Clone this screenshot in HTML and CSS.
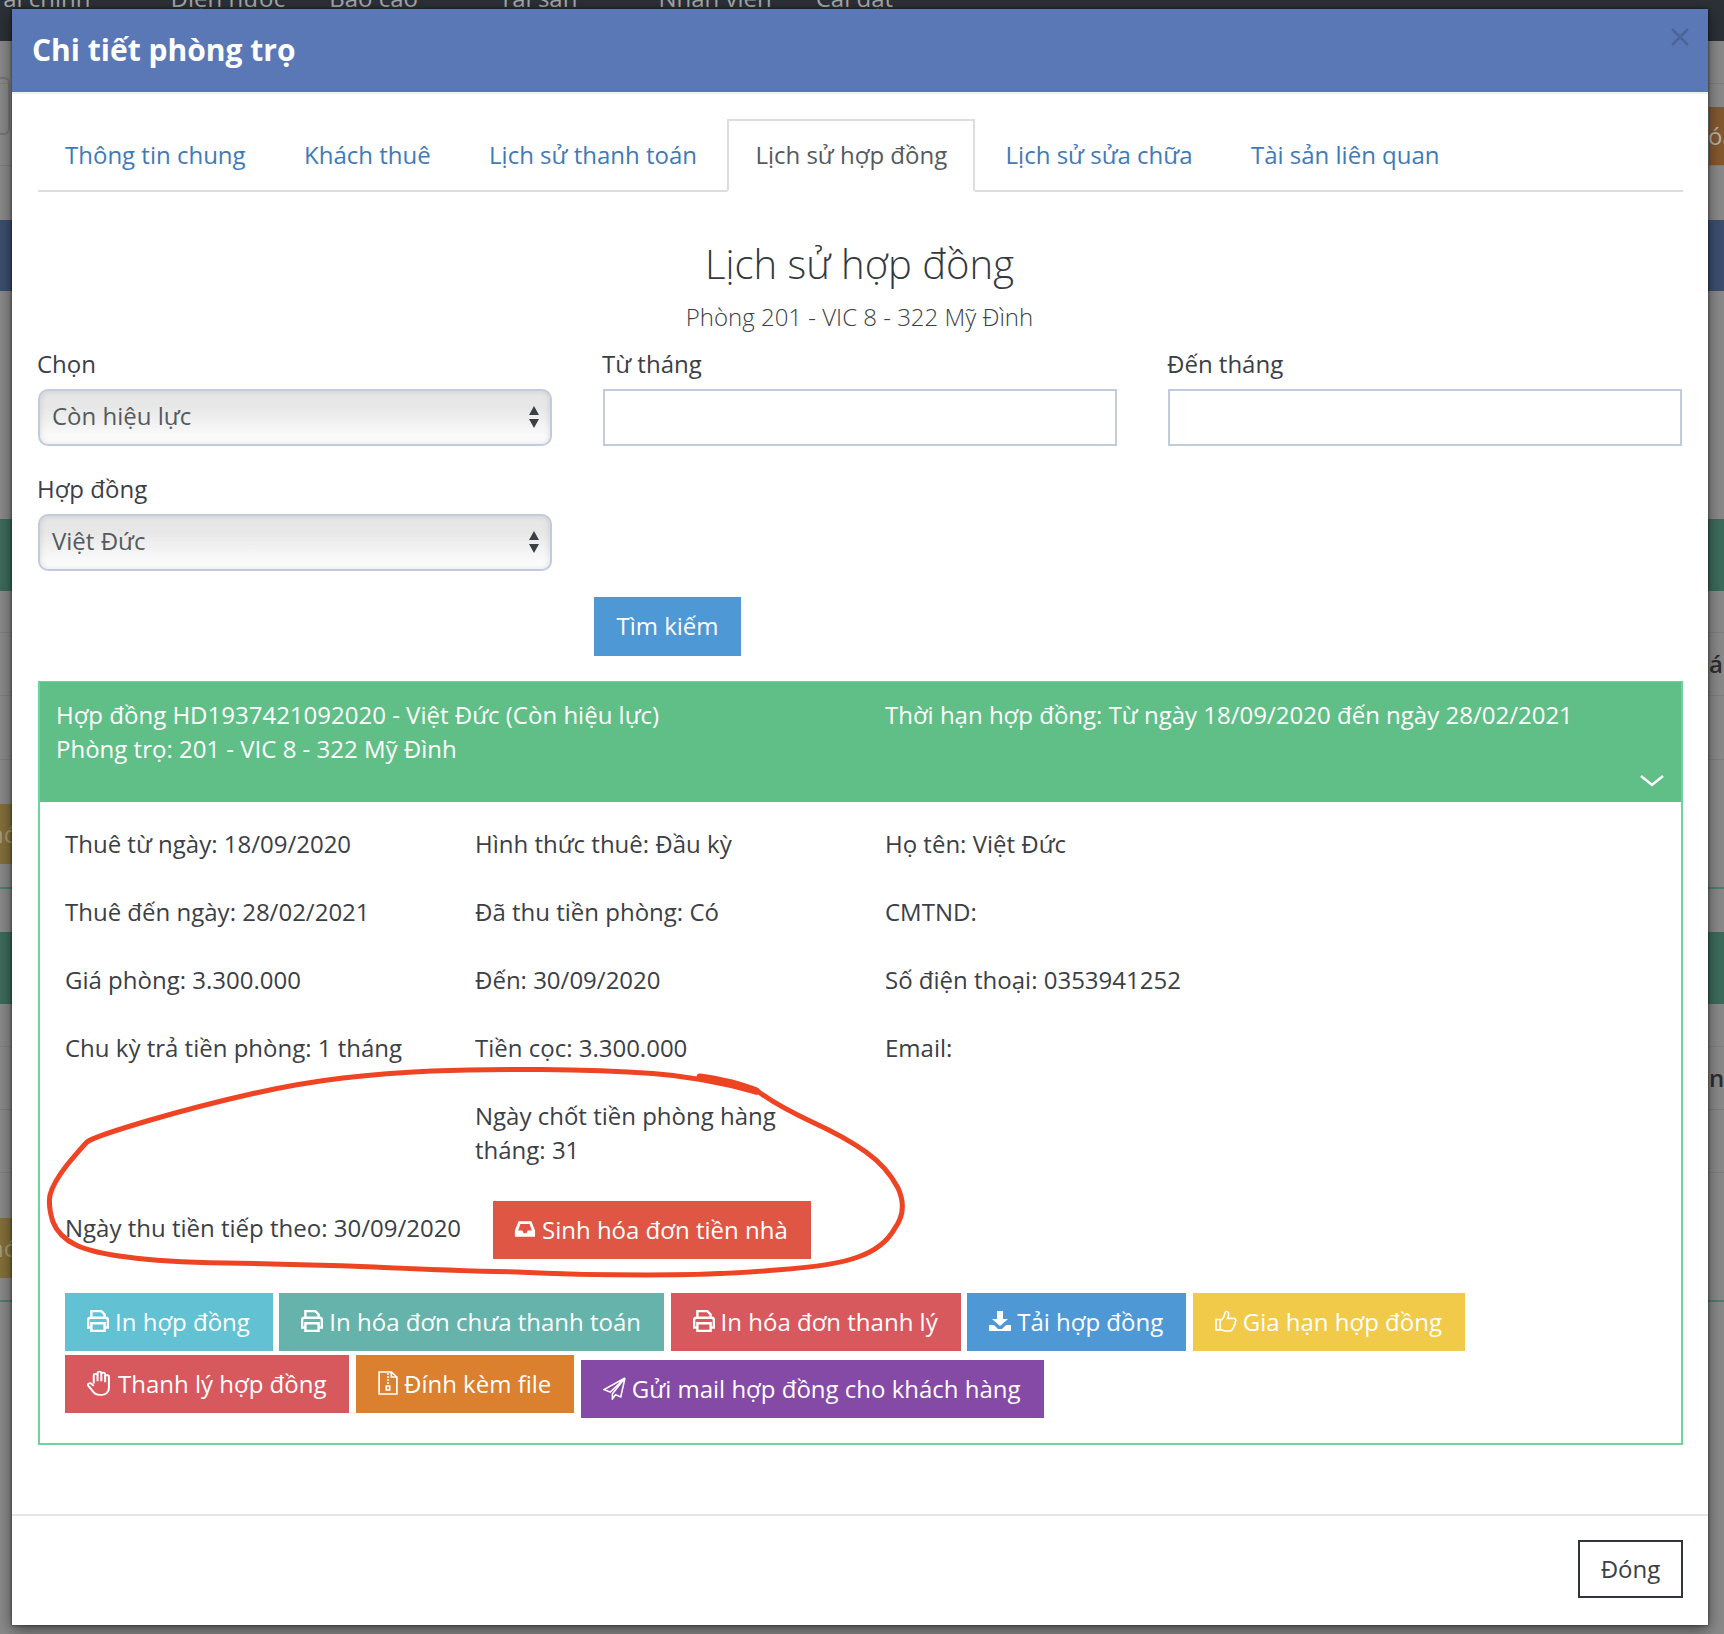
FILE: index.html
```html
<!DOCTYPE html>
<html lang="en">
<head>
	<meta charset="UTF-8">
	<title>Chi tiết phòng trọ</title>
	<link rel="stylesheet" href="styles.css">
</head>
<body>
	<!-- trang phia sau modal -->
	<div class="page">
		<div class="topbar">
			<span class="nav1">Tài chính</span>
			<span class="nav2">Điện nước</span>
			<span class="nav3">Báo cáo</span>
			<span class="nav4">Tài sản</span>
			<span class="nav5">Nhân viên</span>
			<span class="nav6">Cài đặt</span>
		</div>
		<div class="bg-row h43"></div>
		<div class="bg-row h82"><span class="bg-input"></span><span class="bg-orange">óa</span></div>
		<div class="bg-row h54 plain"></div>
		<div class="bg-blue"></div>
		<div class="bg-row h228 plain"></div>
		<div class="bg-green"></div>
		<div class="bg-row h42"></div>
		<div class="bg-row h63"><span></span><span class="bg-text">ár</span></div>
		<div class="bg-row h64"></div>
		<div class="bg-row h129 green-line"><span class="bg-yellow">nó</span></div>
		<div class="bg-row h43 plain"></div>
		<div class="bg-green"></div>
		<div class="bg-row h43"></div>
		<div class="bg-row h63"><span></span><span class="bg-text">n t</span></div>
		<div class="bg-row h63"></div>
		<div class="bg-row h129 green-line"><span class="bg-yellow last">nó</span></div>
	</div>

	<div class="modal">
		<div class="modal-head">
			<h4>Chi tiết phòng trọ</h4>
			<svg class="close-x" viewBox="0 0 18 18"><path d="M1 1l16 16M17 1L1 17"/></svg>
		</div>
		<div class="modal-body">
			<ul class="tabs">
				<li>Thông tin chung</li>
				<li>Khách thuê</li>
				<li>Lịch sử thanh toán</li>
				<li class="active">Lịch sử hợp đồng</li>
				<li>Lịch sử sửa chữa</li>
				<li>Tài sản liên quan</li>
			</ul>

			<h2 class="title">Lịch sử hợp đồng</h2>
			<p class="sub">Phòng 201 - VIC 8 - 322 Mỹ Đình</p>

			<div class="filter">
				<div>
					<label>Chọn</label>
					<div class="sel">Còn hiệu lực
						<svg class="updown" viewBox="0 0 10 22"><path d="M5 0l5 9H0zM5 22l5-9H0z"/></svg>
					</div>
				</div>
				<div>
					<label>Từ tháng</label>
					<input type="text" class="txt">
				</div>
				<div>
					<label>Đến tháng</label>
					<input type="text" class="txt">
				</div>
				<div>
					<label>Hợp đồng</label>
					<div class="sel">Việt Đức
						<svg class="updown" viewBox="0 0 10 22"><path d="M5 0l5 9H0zM5 22l5-9H0z"/></svg>
					</div>
				</div>
			</div>
			<button class="btn search">Tìm kiếm</button>

			<div class="panel">
				<div class="panel-head">
					<div>Hợp đồng HD1937421092020 - Việt Đức (Còn hiệu lực)<br>Phòng trọ: 201 - VIC 8 - 322 Mỹ Đình</div>
					<div>Thời hạn hợp đồng: Từ ngày 18/09/2020 đến ngày 28/02/2021</div>
					<svg class="chev" viewBox="0 0 24 12"><path d="M1 1l11 9 11-9"/></svg>
				</div>
				<div class="panel-body">
					<div class="info">
						<div>Thuê từ ngày: 18/09/2020</div>
						<div>Hình thức thuê: Đầu kỳ</div>
						<div>Họ tên: Việt Đức</div>
						<div>Thuê đến ngày: 28/02/2021</div>
						<div>Đã thu tiền phòng: Có</div>
						<div>CMTND:</div>
						<div>Giá phòng: 3.300.000</div>
						<div>Đến: 30/09/2020</div>
						<div>Số điện thoại: 0353941252</div>
						<div>Chu kỳ trả tiền phòng: 1 tháng</div>
						<div>Tiền cọc: 3.300.000</div>
						<div>Email:</div>
						<div></div>
						<div>Ngày chốt tiền phòng hàng tháng: 31</div>
						<div></div>
						<div class="next-date">Ngày thu tiền tiếp theo: 30/09/2020</div>
						<div class="bill-cell">
							<button class="btn c-bill">
								<svg class="ico inbox" viewBox="0 3 24 19"><path class="solid" fill-rule="evenodd" d="M5 4h14l4 10v6a1 1 0 0 1-1 1H2a1 1 0 0 1-1-1v-6zM7 7L4.500 14H9l1.500 3h3L15 14h4.500L17 7z"/></svg>
								Sinh hóa đơn tiền nhà
							</button>
						</div>
					</div>
					<div class="actions">
						<button class="btn c-info">
							<svg class="ico" viewBox="2 2 20 20"><path d="M6 9V3h9l3 3v3M6 18H3v-7a2 2 0 0 1 2-2h14a2 2 0 0 1 2 2v7h-3M6 14h12v7H6z"/></svg>
							In hợp đồng
						</button>
						<button class="btn c-teal">
							<svg class="ico" viewBox="2 2 20 20"><path d="M6 9V3h9l3 3v3M6 18H3v-7a2 2 0 0 1 2-2h14a2 2 0 0 1 2 2v7h-3M6 14h12v7H6z"/></svg>
							In hóa đơn chưa thanh toán
						</button>
						<button class="btn c-red">
							<svg class="ico" viewBox="2 2 20 20"><path d="M6 9V3h9l3 3v3M6 18H3v-7a2 2 0 0 1 2-2h14a2 2 0 0 1 2 2v7h-3M6 14h12v7H6z"/></svg>
							In hóa đơn thanh lý
						</button>
						<button class="btn c-blue">
							<svg class="ico" viewBox="1 1 22 22"><path class="solid" d="M9 2h6v8h5l-8 7-8-7h5zM1 16h5l4 4h4l4-4h5v6H1z"/></svg>
							Tải hợp đồng
						</button>
						<button class="btn c-yellow">
							<svg class="ico thin" viewBox="2 2 21 21"><path d="M3 11h4v10H3zM7 12c2-1 4-4 4.500-7 .2-2 3-2 3.500 0 .3 2-.5 4-1 5h6c2 0 2.500 2.500 1 3.500.8 1.500 0 3-1 3.300.3 1.500-.5 2.700-1.500 3 .2 1.200-.6 2.200-2 2.200H12c-2 0-3-1-5-1.500"/></svg>
							Gia hạn hợp đồng
						</button>
						<button class="btn c-red">
							<svg class="ico thin hand" viewBox="2 1 17 22" preserveAspectRatio="none"><path d="M7 12V5a1.400 1.400 0 0 1 2.800 0v5M9.800 10V3a1.400 1.400 0 0 1 2.800 0v7M12.600 10V3.800a1.400 1.400 0 0 1 2.800 0V11M15.400 11V6a1.400 1.400 0 0 1 2.800 0v10c0 3-2 6-5 6h-2c-2 0-3.500-1-4.500-2.500L3 14c-1-1.500 1-3 2.300-1.700L7 14"/></svg>
							Thanh lý hợp đồng
						</button>
						<button class="btn c-orange">
							<svg class="ico thin zip" viewBox="3 0 18 24" preserveAspectRatio="none"><path d="M4 1h11l5 5v17H4zM15 1v5h5M11 3h2M11 6h2M11 9h2M11 12h2M10.500 15h3v4h-3z"/></svg>
							Đính kèm file
						</button>
						<button class="btn c-purple">
							<svg class="ico thin plane" viewBox="1 1 22 22"><path d="M22 2L2 13l6 2.500zM22 2L10 17v5l3-4 5 2z"/></svg>
							Gửi mail hợp đồng cho khách hàng
						</button>
					</div>
				</div>
			</div>
		</div>
		<div class="modal-foot">
			<button class="btn-close">Đóng</button>
		</div>
	</div>

	<!-- vong tron do ve tay tren anh chup -->
	<svg class="scribble" viewBox="0 0 1724 1634">
		<path d="M756 1092Q702 1077 653 1073.500Q604 1070 541 1069.500Q478 1069 432 1071Q386 1073 343 1078Q300 1083 251 1094Q202 1105 147 1121Q93 1137 87 1142Q82 1147 67 1165Q53 1183 50 1195Q48 1207 53 1222Q59 1237 76 1245Q93 1253 127 1257Q162 1262 225 1263Q288 1264 374 1267Q460 1271 517 1272Q575 1275 647 1275Q719 1275 776 1270Q834 1266 858 1257Q884 1248 895 1228Q908 1210 898 1188Q887 1167 866 1152Q845 1137 810 1121Q776 1105 756 1090"/>
		<path class="thick" d="M700 1077Q735 1082 756 1091"/>
	</svg>
</body>
</html>
```

FILE: styles.css
```css
*{box-sizing: border-box;}
html,body{margin: 0;padding: 0;}
body{width: 1724px;height: 1634px;overflow: hidden;position: relative;background: #8a8a8a;font-family: "Open Sans","Noto Sans",sans-serif;font-size: 24px;line-height: 34px;color: #3b4046;}

/* nen phia sau */
.page{position: absolute;top: 0;left: 0;width: 100%;height: 100%;background: #8a8a8a;}
.topbar{height: 41px;background: #2c3037;color: #a5a8ac;overflow: hidden;display: flex;align-items: flex-start;font-size: 24px;line-height: 34px;}
.topbar span{margin-top: -19px;flex: none;}
.nav1{margin-left: -10px;}
.nav2{margin-left: 80px;}
.nav3{margin-left: 44px;}
.nav4{margin-left: 81px;}
.nav5{margin-left: 81px;}
.nav6{margin-left: 44px;}
.bg-row{display: flex;justify-content: space-between;align-items: flex-end;border-bottom: 1px solid #7f7f7f;}
.plain{border-bottom: 0;}
.green-line{border-bottom: 2px solid #4f7f70;align-items: flex-start;}
.h42{height: 42px;}
.h43{height: 43px;}
.h54{height: 54px;}
.h63{height: 63px;}
.h64{height: 64px;}
.h82{height: 82px;}
.h129{height: 129px;}
.h228{height: 228px;}
.bg-input{height: 58px;border: 2px solid #777;border-radius: 6px;margin-left: -4px;width: 14px;margin-bottom: 30px;}
.bg-orange{width: 15px;height: 58px;background: #84592f;color: #b9b4ac;line-height: 58px;overflow: hidden;white-space: nowrap;text-indent: -1px;}
.bg-blue{height: 71px;background: #3c4f70;}
.bg-green{height: 72px;background: #3d6b5b;}
.bg-text{width: 15px;overflow: hidden;white-space: nowrap;color: #2e2e2e;font-weight: 600;align-self: center;}
.bg-yellow{width: 12px;height: 60px;background: #84703a;color: #a89d7b;line-height: 60px;overflow: hidden;white-space: nowrap;text-indent: -11px;margin-top: 44px;}
.bg-yellow.last{margin-top: 45px;}

/* modal */
.modal{position: absolute;left: 12px;top: 9px;width: 1696px;height: 1616px;background: #fff;box-shadow: 0 5px 15px rgba(0,0,0,.5),0 0 3px rgba(0,0,0,.6);}
.modal-head{height: 85px;background: #5a78b5;border-bottom: 2px solid #f1efeb;padding: 0 20px;display: flex;align-items: flex-start;justify-content: space-between;}
.modal-head h4{margin: 0;font-size: 30px;line-height: 81px;font-weight: 700;color: #fff;}
.close-x{width: 18px;height: 18px;margin: 19px -1px 0 0;}
.close-x path{fill: none;stroke: #4b6598;stroke-width: 2.500;}
.modal-body{padding: 25px 25px 0 26px;}

.tabs{list-style: none;margin: 0;padding: 0;display: flex;height: 73px;border-bottom: 2px solid #ddd;}
.tabs li{padding: 0 26px;height: 73px;border: 2px solid transparent;margin-right: 2.400px;line-height: 67px;color: #3f7ab7;}
.tabs li:first-child{margin-left: -1px;}
.tabs li.active{color: #555a60;background: #fff;border-color: #ddd;border-bottom-color: #fff;}

.title{margin: 47px 0 0;padding-right: 2px;font-size: 40px;line-height: 50px;font-weight: 300;text-align: center;color: #34393f;}
.sub{margin: 11px 0 0;padding-right: 2px;text-align: center;font-weight: 300;}

.filter{display: grid;grid-template-columns: repeat(3,1fr);column-gap: 51px;row-gap: 26px;margin: 13px 1px 0 0;}
.filter label{display: block;margin: 0 0 8px -1px;}
.sel{height: 57px;border: 2px solid #c2cbdc;border-radius: 10px;background: linear-gradient(#e7e7e7 30%,#fff 100%);box-shadow: inset 0 0 6px rgba(0,0,0,.12);padding-left: 12px;line-height: 50px;color: #555a60;position: relative;}
.updown{position: absolute;right: 10px;top: 15px;width: 12px;height: 22px;}
.updown path{fill: #3b4046;}
.txt{display: block;width: 100%;height: 57px;border: 2px solid #c2cbdc;background: #fff;border-radius: 0;outline: 0;}

.btn{display: inline-flex;align-items: center;height: 58px;border: 0;border-radius: 0;padding: 0 23px 2px 22px;font-family: inherit;font-size: 24px;color: #fff;white-space: nowrap;}
.search{margin: 26px 0 0 556px;background: #4f98d6;width: 147px;height: 59px;justify-content: center;padding: 0 0 2px;}

.panel{margin-top: 25px;border: 2px solid #6fd3a0;}
.panel-head{height: 120px;margin-top: -1px;background: #5fbf87;color: #fff;padding: 16px 17px 0 16px;display: grid;grid-template-columns: 829px 1fr;align-content: start;position: relative;}
.chev{position: absolute;right: 17px;bottom: 15px;width: 24px;height: 12px;}
.chev path{fill: none;stroke: #fff;stroke-width: 2.500;}
.panel-body{padding: 25px;}
.info{display: grid;grid-template-columns: 410px 410px 1fr;row-gap: 34px;}
.info>div{max-width: 360px;}
.info>.next-date{max-width: none;align-self: center;padding-bottom: 4px;}
.info>.bill-cell{max-width: none;padding-left: 18px;}
.c-bill{background: #df5645;padding-left: 21px;}
.actions{display: flex;flex-wrap: wrap;column-gap: 6.500px;row-gap: 4px;margin-top: 34px;}
.c-info{background: #62c1d3;}
.c-teal{background: #65b3ab;}
.c-red{background: #d7595e;}
.c-blue{background: #4f98d6;}
.c-yellow{background: #f1ca4a;}
.c-orange{background: #da802e;}
.c-purple{background: #8549a6;margin-top: 5px;}

.ico{flex: none;width: 22px;height: 22px;margin-right: 6px;}
.ico path{fill: none;stroke: #fff;stroke-width: 2.200;}
.ico.thin path{stroke-width: 1.500;}
.ico.inbox{height: 18px;}
.ico.hand{width: 23px;height: 25px;margin-right: 8px;}
.ico.zip{width: 20px;height: 24px;}
.ico.plane{width: 23px;height: 23px;}
.ico .solid{fill: #fff;stroke: none;}

.modal-foot{margin-top: 69px;border-top: 2px solid #e5e5e5;padding: 24px 25px 0;display: flex;justify-content: flex-end;}
.btn-close{width: 105px;height: 58px;border: 2px solid #2f353a;background: #fff;border-radius: 0;font-family: inherit;font-size: 24px;color: #3b4046;padding: 0 0 2px;}

.scribble{position: absolute;left: 0;top: 0;width: 1724px;height: 1634px;pointer-events: none;}
.scribble path{fill: none;stroke: #ee4424;stroke-width: 5;stroke-linecap: round;}
.scribble .thick{stroke-width: 7;}
```
